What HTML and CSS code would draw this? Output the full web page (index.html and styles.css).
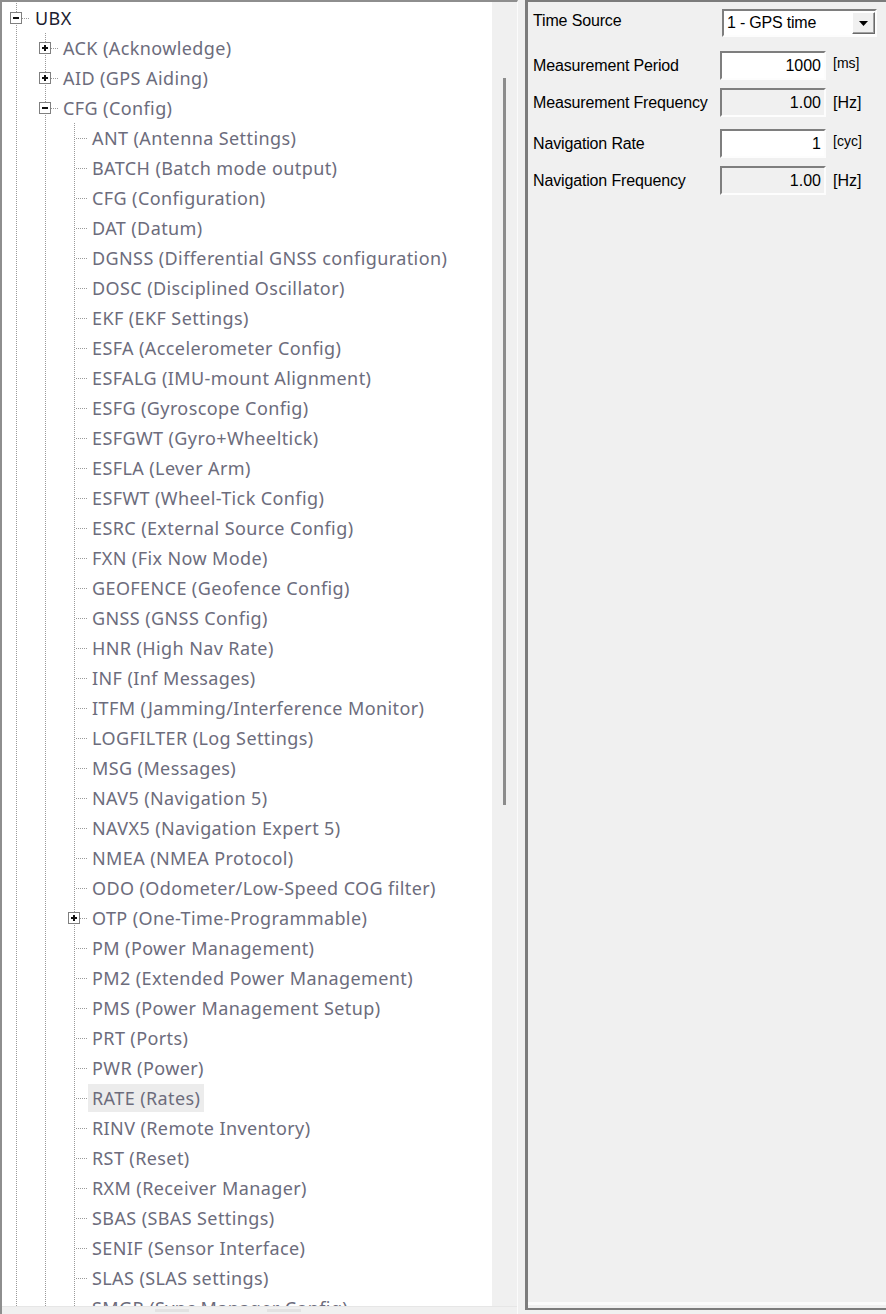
FILE: index.html
```html
<!DOCTYPE html>
<html>
<head>
<meta charset="utf-8">
<link rel="stylesheet" href="styles.css">
</head>
<body>
<div class="app">
  <div class="left">
    <div class="treeview">
      <div class="tree">
        <div class="row l0"><span class="c top"><span class="bx minus"></span></span><span class="t root">UBX</span></div>
        <div class="row"><span class="g"></span><span class="c"><span class="bx plus"></span></span><span class="t">ACK (Acknowledge)</span></div>
        <div class="row"><span class="g"></span><span class="c"><span class="bx plus"></span></span><span class="t">AID (GPS Aiding)</span></div>
        <div class="row"><span class="g"></span><span class="c"><span class="bx minus"></span></span><span class="t">CFG (Config)</span></div>
        <div class="row"><span class="g"></span><span class="g"></span><span class="c"></span><span class="t">ANT (Antenna Settings)</span></div>
        <div class="row"><span class="g"></span><span class="g"></span><span class="c"></span><span class="t">BATCH (Batch mode output)</span></div>
        <div class="row"><span class="g"></span><span class="g"></span><span class="c"></span><span class="t">CFG (Configuration)</span></div>
        <div class="row"><span class="g"></span><span class="g"></span><span class="c"></span><span class="t">DAT (Datum)</span></div>
        <div class="row"><span class="g"></span><span class="g"></span><span class="c"></span><span class="t">DGNSS (Differential GNSS configuration)</span></div>
        <div class="row"><span class="g"></span><span class="g"></span><span class="c"></span><span class="t">DOSC (Disciplined Oscillator)</span></div>
        <div class="row"><span class="g"></span><span class="g"></span><span class="c"></span><span class="t">EKF (EKF Settings)</span></div>
        <div class="row"><span class="g"></span><span class="g"></span><span class="c"></span><span class="t">ESFA (Accelerometer Config)</span></div>
        <div class="row"><span class="g"></span><span class="g"></span><span class="c"></span><span class="t">ESFALG (IMU-mount Alignment)</span></div>
        <div class="row"><span class="g"></span><span class="g"></span><span class="c"></span><span class="t">ESFG (Gyroscope Config)</span></div>
        <div class="row"><span class="g"></span><span class="g"></span><span class="c"></span><span class="t">ESFGWT (Gyro+Wheeltick)</span></div>
        <div class="row"><span class="g"></span><span class="g"></span><span class="c"></span><span class="t">ESFLA (Lever Arm)</span></div>
        <div class="row"><span class="g"></span><span class="g"></span><span class="c"></span><span class="t">ESFWT (Wheel-Tick Config)</span></div>
        <div class="row"><span class="g"></span><span class="g"></span><span class="c"></span><span class="t">ESRC (External Source Config)</span></div>
        <div class="row"><span class="g"></span><span class="g"></span><span class="c"></span><span class="t">FXN (Fix Now Mode)</span></div>
        <div class="row"><span class="g"></span><span class="g"></span><span class="c"></span><span class="t">GEOFENCE (Geofence Config)</span></div>
        <div class="row"><span class="g"></span><span class="g"></span><span class="c"></span><span class="t">GNSS (GNSS Config)</span></div>
        <div class="row"><span class="g"></span><span class="g"></span><span class="c"></span><span class="t">HNR (High Nav Rate)</span></div>
        <div class="row"><span class="g"></span><span class="g"></span><span class="c"></span><span class="t">INF (Inf Messages)</span></div>
        <div class="row"><span class="g"></span><span class="g"></span><span class="c"></span><span class="t">ITFM (Jamming/Interference Monitor)</span></div>
        <div class="row"><span class="g"></span><span class="g"></span><span class="c"></span><span class="t">LOGFILTER (Log Settings)</span></div>
        <div class="row"><span class="g"></span><span class="g"></span><span class="c"></span><span class="t">MSG (Messages)</span></div>
        <div class="row"><span class="g"></span><span class="g"></span><span class="c"></span><span class="t">NAV5 (Navigation 5)</span></div>
        <div class="row"><span class="g"></span><span class="g"></span><span class="c"></span><span class="t">NAVX5 (Navigation Expert 5)</span></div>
        <div class="row"><span class="g"></span><span class="g"></span><span class="c"></span><span class="t">NMEA (NMEA Protocol)</span></div>
        <div class="row"><span class="g"></span><span class="g"></span><span class="c"></span><span class="t">ODO (Odometer/Low-Speed COG filter)</span></div>
        <div class="row"><span class="g"></span><span class="g"></span><span class="c"><span class="bx plus"></span></span><span class="t">OTP (One-Time-Programmable)</span></div>
        <div class="row"><span class="g"></span><span class="g"></span><span class="c"></span><span class="t">PM (Power Management)</span></div>
        <div class="row"><span class="g"></span><span class="g"></span><span class="c"></span><span class="t">PM2 (Extended Power Management)</span></div>
        <div class="row"><span class="g"></span><span class="g"></span><span class="c"></span><span class="t">PMS (Power Management Setup)</span></div>
        <div class="row"><span class="g"></span><span class="g"></span><span class="c"></span><span class="t">PRT (Ports)</span></div>
        <div class="row"><span class="g"></span><span class="g"></span><span class="c"></span><span class="t">PWR (Power)</span></div>
        <div class="row"><span class="g"></span><span class="g"></span><span class="c"></span><span class="t sel">RATE (Rates)</span></div>
        <div class="row"><span class="g"></span><span class="g"></span><span class="c"></span><span class="t">RINV (Remote Inventory)</span></div>
        <div class="row"><span class="g"></span><span class="g"></span><span class="c"></span><span class="t">RST (Reset)</span></div>
        <div class="row"><span class="g"></span><span class="g"></span><span class="c"></span><span class="t">RXM (Receiver Manager)</span></div>
        <div class="row"><span class="g"></span><span class="g"></span><span class="c"></span><span class="t">SBAS (SBAS Settings)</span></div>
        <div class="row"><span class="g"></span><span class="g"></span><span class="c"></span><span class="t">SENIF (Sensor Interface)</span></div>
        <div class="row"><span class="g"></span><span class="g"></span><span class="c"></span><span class="t">SLAS (SLAS settings)</span></div>
        <div class="row"><span class="g"></span><span class="g"></span><span class="c"></span><span class="t">SMGR (Sync Manager Config)</span></div>
      </div>
      <div class="vscroll"><div class="thumb"></div></div>
    </div>
    <div class="hscroll"><span class="hseg"></span><span class="hseg"></span></div>
  </div>
  <div class="sep"></div>
  <div class="right">
    <div class="frow r1">
      <span class="lbl up">Time Source</span>
      <div class="combo"><span class="cval">1 - GPS time</span><span class="cbtn"><svg width="9" height="5" viewBox="0 0 9 5"><path d="M0 0H9L4.5 5Z" fill="#000"/></svg></span></div>
    </div>
    <div class="frow r2">
      <span class="lbl">Measurement Period</span>
      <div class="field">1000</div>
      <span class="unit sm">[ms]</span>
    </div>
    <div class="frow r3">
      <span class="lbl">Measurement Frequency</span>
      <div class="field dis">1.00</div>
      <span class="unit">[Hz]</span>
    </div>
    <div class="frow r4">
      <span class="lbl">Navigation Rate</span>
      <div class="field">1</div>
      <span class="unit sm">[cyc]</span>
    </div>
    <div class="frow r5">
      <span class="lbl">Navigation Frequency</span>
      <div class="field dis">1.00</div>
      <span class="unit">[Hz]</span>
    </div>
  </div>
</div>
</body>
</html>
```
FILE: styles.css
```css
html, body {
  margin: 0;
  padding: 0;
  background: #f0f0f0;
  overflow: hidden;
}
.app {
  display: flex;
  width: 886px;
  height: 1314px;
  background: #f0f0f0;
}
/* left tree pane */
.left {
  width: 518px;
  height: 1314px;
  box-sizing: border-box;
  border-top: 2px solid #8e8e8e;
  border-left: 2px solid #8e8e8e;
  border-right: 1px solid #fbfbfb;
  display: flex;
  flex-direction: column;
  flex: none;
}
.treeview {
  display: flex;
  height: 1304px;
  flex: none;
}
.tree {
  flex: 1;
  background: #fff;
  overflow: hidden;
  padding: 1px 0 0 1px;
  font-family: "Noto Sans", "Noto Sans CJK SC", sans-serif;
  font-size: 18px;
  letter-spacing: 0.4px;
}
.row {
  display: flex;
  align-items: center;
  height: 30px;
  white-space: nowrap;
}
.g, .c {
  position: relative;
  flex: none;
  width: 29px;
  height: 30px;
}
.g::before, .c::before {
  content: "";
  position: absolute;
  left: 13px;
  top: 0;
  width: 1px;
  height: 30px;
  background: repeating-linear-gradient(to bottom, #9a9a9a 0 1px, transparent 1px 2px);
}
.c::after {
  content: "";
  position: absolute;
  left: 15px;
  top: 15px;
  width: 12px;
  height: 1px;
  background: repeating-linear-gradient(to right, #9a9a9a 0 1px, transparent 1px 2px);
}
.bx {
  position: absolute;
  left: 7px;
  top: 9px;
  width: 12px;
  height: 12px;
  box-sizing: border-box;
  border: 1px solid #7f7f7f;
  background: #fff;
  z-index: 1;
}
.bx::before {
  content: "";
  position: absolute;
  left: 2px;
  top: 4px;
  width: 6px;
  height: 2px;
  background: #111;
}
.bx.plus::after {
  content: "";
  position: absolute;
  left: 4px;
  top: 2px;
  width: 2px;
  height: 6px;
  background: #111;
}
.t {
  margin-left: -2px;
  padding: 0 4px;
  height: 28px;
  line-height: 28px;
  color: #6c6c7c;
}
.t.root {
  color: #1c1c30;
  margin-left: -1px;
}
.t.sel {
  background: #ececec;
}
.vscroll {
  width: 25px;
  flex: none;
  background: #f0f0f0;
  padding-top: 76px;
  box-sizing: border-box;
}
.thumb {
  width: 3px;
  height: 727px;
  margin-left: 11px;
  background: #8c8c8c;
}
.hscroll {
  flex: 1;
  background: #f0f0f0;
  border-top: 1px solid #e6e6e6;
  display: flex;
  gap: 78px;
  padding-left: 153px;
}
.hseg {
  width: 34px;
  height: 3px;
  margin-top: 2px;
  background: #e2e2e2;
}
.sep {
  width: 7px;
  flex: none;
}
/* right pane */
.right {
  flex: 1;
  height: 1310px;
  box-sizing: border-box;
  border-top: 2px solid #7c7c7c;
  border-left: 3px solid #7c7c7c;
  border-bottom: 2px solid #7c7c7c;
  box-shadow: inset 0 -3px 0 #f0f0f0, inset 0 -6px 0 #fbfbfb;
  padding: 0 0 0 5px;
  font-family: "Liberation Sans", Arial, sans-serif;
  font-size: 16px;
  color: #000;
}
.frow {
  display: flex;
  align-items: center;
}
.r1 { margin-top: 7px; }
.r2 { margin-top: 14px; }
.r3 { margin-top: 8px; }
.r4 { margin-top: 12px; }
.r5 { margin-top: 8px; }
.lbl {
  width: 187px;
  flex: none;
  letter-spacing: -0.15px;
}
.lbl.up {
  margin-bottom: 4px;
}
.combo {
  margin-left: 2px;
  width: 155px;
  height: 28px;
  box-sizing: border-box;
  border-top: 2px solid #7e7e7e;
  border-left: 2px solid #7e7e7e;
  border-right: 2px solid #fdfdfd;
  border-bottom: 2px solid #fdfdfd;
  background: #fff;
  display: flex;
  align-items: center;
  justify-content: space-between;
}
.cval {
  padding-left: 3px;
  letter-spacing: -0.2px;
}
.cbtn {
  width: 23px;
  height: 22px;
  box-sizing: border-box;
  background: #f0f0f0;
  border-top: 1px solid #fff;
  border-left: 1px solid #fff;
  border-right: 1px solid #6a6a6a;
  border-bottom: 1px solid #6a6a6a;
  box-shadow: inset -1px -1px 0 #a0a0a0;
  display: flex;
  align-items: center;
  justify-content: center;
}
.field {
  width: 106px;
  height: 29px;
  box-sizing: border-box;
  border-top: 2px solid #7e7e7e;
  border-left: 2px solid #7e7e7e;
  border-right: 2px solid #fdfdfd;
  border-bottom: 2px solid #fdfdfd;
  background: #fff;
  text-align: right;
  padding-right: 3px;
  line-height: 25px;
  flex: none;
}
.field.dis {
  background: #f0f0f0;
}
.unit {
  margin-left: 7px;
}
.unit.sm {
  font-size: 14px;
  align-self: flex-start;
  margin-top: 4px;
}
```
